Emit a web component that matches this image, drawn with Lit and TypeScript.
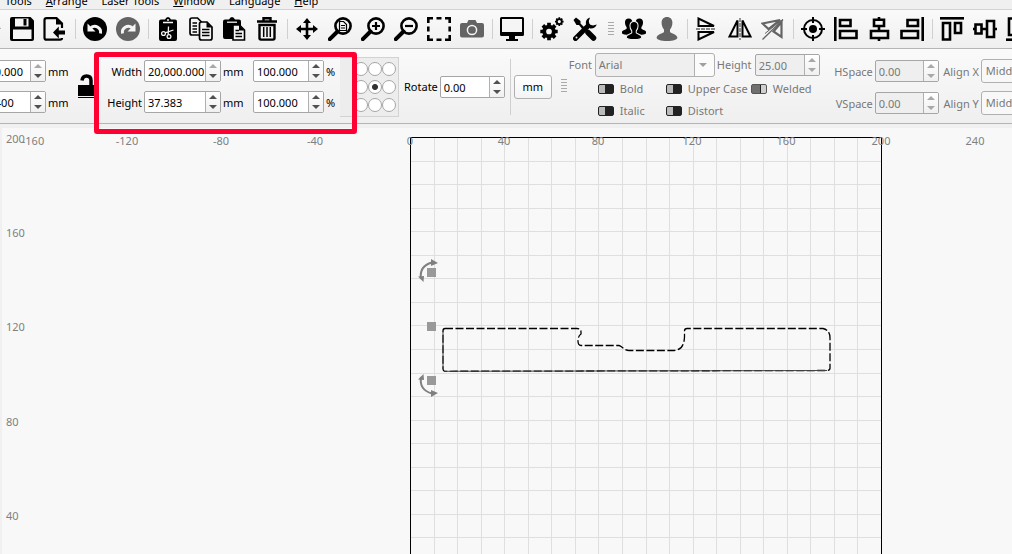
import { LitElement, html, css, svg } from "lit";
import { customElement, property } from "lit/decorators.js";

const line = (d: string, w = 2) =>
  svg`<path d=${d} fill="none" stroke="currentColor" stroke-width=${w}></path>`;

const lens = svg`<circle cx="15" cy="9" r="7.6" fill="none" stroke="currentColor" stroke-width="2.6"></circle>
  <path d="M9.5 14.5 1.8 22.2" stroke="currentColor" stroke-width="4" stroke-linecap="round"></path>`;

const bust = (x: number, y: number, s: number) =>
  svg`<path transform="translate(${x} ${y}) scale(${s})" d="M12 0C8.600 0 6.600 2.400 6.600 5.800C6.600 8.600 7.600 11 9 12.600V15C8 16.600 2 17.200 1.600 20.500C1.600 22.800 5.500 24 12 24S22.400 22.800 22.400 20.500C22 17.200 16 16.600 15 15V12.600C16.400 11 17.400 8.600 17.400 5.800C17.400 2.400 15.400 0 12 0Z"></path>`;

const gear = (cx: number, cy: number, r: number, t: number) => svg`
  <circle cx=${cx} cy=${cy} r=${r} fill="none" stroke="currentColor" stroke-width=${t}></circle>
  <g stroke="currentColor" stroke-width=${t * 0.95}>${[0, 45, 90, 135].map(
    (a) => svg`<path transform="rotate(${a} ${cx} ${cy})" d="M${cx} ${cy - r - t}V${cy - r}M${cx} ${cy + r}V${cy + r + t}"></path>`
  )}</g>`;

const icons: Record<string, unknown> = {
  open: svg`<path d="M1 20V4H9L11 6H19V9L23.500 11 19 20Z"></path>`,
  save: svg`<path d="M2 0H20.500L24 3.500V22Q24 24 22 24H2Q0 24 0 22V2Q0 0 2 0Z"></path>
    <path d="M3 12.500H21.500V22H3ZM5 1.500H18.500V9.500H5Z" fill="#f5f5f5"></path><path d="M13.500 2H16.500V8.500H13.500Z"></path>`,
  exit: svg`${line("M19 11V6.500L13.500 1.200H3.500Q1.500 1.200 1.500 3.200V20.700Q1.500 22.700 3.500 22.700H17Q19 22.700 19 21", 2.2)}
    <path d="M13 1V7.500H19.500ZM10 15.500 15.800 9.500V13.500H22V17.500H15.800V21.500Z"></path>`,
  undo: svg`<circle cx="12" cy="12" r="12"></circle><path d="M8 10.500A6 6 0 0 1 17.500 16.500" fill="none" stroke="#f5f5f5" stroke-width="3"></path><path d="M4.500 6.500V14.500H12.500Z" fill="#f5f5f5"></path>`,
  redo: svg`<circle cx="12" cy="12" r="12"></circle><path d="M16 10.500A6 6 0 0 0 6.500 16.500" fill="none" stroke="#f5f5f5" stroke-width="3"></path><path d="M19.500 6.500V14.500H11.500Z" fill="#f5f5f5"></path>`,
  cut: svg`<path d="M5 2.500H9Q10 0 12 0T15 2.500H19Q21 2.500 21 4.500V22Q21 24 19 24H5Q3 24 3 22V4.500Q3 2.500 5 2.500Z"></path>
    <g fill="none" stroke="#f5f5f5" stroke-width="1.300"><path d="M7 5.500H17M11 3H13"></path><circle cx="7.500" cy="16.500" r="1.900"></circle><circle cx="13" cy="19.500" r="1.900"></circle><path d="M9 15.800 17.500 13M12.200 17.500 12.500 9.500"></path></g>`,
  copy: svg`<g fill="#f5f5f5" stroke="currentColor" stroke-width="1.700"><path d="M3 1H8.500L13 5.500V18H3Q1 18 1 16V3Q1 1 3 1Z"></path><path d="M12.500 5H18L23 10V21Q23 23 21 23H12.500Q10.500 23 10.500 21V7Q10.500 5 12.500 5Z"></path></g>
    ${line("M3.500 6H8M3.500 9H8M3.500 12H8M3.500 15H8", 1.3)}${line("M13 12.500H20.500M13 15.500H20.500M13 18.500H20.500", 1.5)}<path d="M17.500 5V10.500H23Z"></path>`,
  paste: svg`<path d="M3 2.500H7Q8 0 10 0T13 2.500H17Q19 2.500 19 4.500V22H3Q1 22 1 20V4.500Q1 2.500 3 2.500Z"></path>
    <path d="M5 5.200H15" stroke="#f5f5f5" stroke-width="1.300"></path>
    <path d="M11 8H17.500L22.500 13V23H11Z" fill="#f5f5f5" stroke="currentColor" stroke-width="1.600"></path>${line("M13.500 13.500H17M13.500 16.500H20M13.500 19.500H20", 1.3)}<path d="M17 8V13.500H22.500Z"></path>`,
  trash: svg`${line("M2 4.500H22M8.500 4V1.200H15.500V4", 2.4)}${line("M4.500 8V21Q4.500 22.600 6 22.600H18Q19.500 22.600 19.500 21V8Z", 2.4)}${line("M8.700 10V20M12 10V20M15.300 10V20", 1.5)}`,
  move: svg`<path d="M12 1 16 6H13.300V10.700H18V8L23 12 18 16V13.300H13.300V18H16L12 23 8 18H10.700V13.300H6V16L1 12 6 8V10.700H10.700V6H8Z"></path>`,
  zoomPage: svg`${lens}<path d="M11.500 4.500H15.500L18.500 7.500V13.500H11.500Z" fill="none" stroke="currentColor" stroke-width="1.200"></path>${line("M13 8.500H17M13 11H17", 1)}`,
  zoomIn: svg`${lens}${line("M15 5V13M11 9H19", 2.2)}`,
  zoomOut: svg`${lens}${line("M11 9H19", 2.2)}`,
  frame: svg`${line("M1.300 6V1.300H6M9.500 1.300H14.500M18 1.300H22.700V6M22.700 9.500V14.500M22.700 18V22.700H18M14.500 22.700H9.500M6 22.700H1.300V18M1.300 14.500V9.500", 2.6)}`,
  camera: svg`<path d="M2 6H7L8.500 3H15.500L17 6H22Q24 6 24 8V18.500Q24 20.500 22 20.500H2Q0 20.500 0 18.500V8Q0 6 2 6Z"></path><circle cx="12" cy="13" r="4.600" fill="none" stroke="#f5f5f5" stroke-width="1.500"></circle>`,
  monitor: svg`<path d="M1.500 0H22.500Q24 0 24 1.500V17.500Q24 19 22.500 19H15V22H18V24H6V22H9V19H1.500Q0 19 0 17.500V1.500Q0 0 1.500 0Z"></path><path d="M2 2H22V15H2Z" fill="#f5f5f5"></path>`,
  gears: svg`${gear(9, 14.500, 4.800, 3.900)}${gear(19.300, 4.600, 2.500, 1.800)}`,
  tools: svg`<path d="M2.500 21.500 15 9" stroke="currentColor" stroke-width="5" stroke-linecap="round"></path>
    <path d="M17 0.500Q12 2 13 7.500L17 11.500Q22 12 23.800 7.500L20 8.500 16.500 7.500 15.800 4Z"></path>
    <path d="M0.500 3 3 0.500 7.500 4V6.500L12 11 10 13 6 8H3.500Z"></path>
    <path d="M15 15.500 20.500 21" stroke="currentColor" stroke-width="5.500" stroke-linecap="round"></path><circle cx="3.500" cy="20.500" r="1" fill="#f5f5f5"></circle>`,
  group: svg`${bust(-1.500, 1.500, 0.680)}${bust(9.200, 1.500, 0.680)}<g stroke="#f5f5f5" stroke-width="1.400">${bust(3, 4.500, 0.750)}</g>`,
  person: bust(0, 0, 1),
  flipV: svg`${line("M3.500 1.500V9H19Z", 2)}${line("M3.500 22.500V15H19Z", 2)}<path d="M1 12H21" stroke="#888" stroke-width="2" stroke-dasharray="4 1"></path>`,
  flipH: svg`${line("M9.500 3.500V19.500H1.500Z", 2)}${line("M14.500 3.500V19.500H22.500Z", 2)}<path d="M12 1V23" stroke="#888" stroke-width="1.800" stroke-dasharray="4 1"></path>`,
  mirror: svg`${line("M1.500 6.500 19 3 7.500 12ZM20.500 5V20L12.500 14.500Z", 2.2)}${line("M1.500 22.500 22 2.500", 1.3)}${line("M4 16.500 20 3.500", 1)}`,
  target: svg`${line("M12 0V6M12 18V24M0 12H6M18 12H24", 2)}<circle cx="12" cy="12" r="9" fill="none" stroke="currentColor" stroke-width="2"></circle><circle cx="12" cy="12" r="4"></circle>`,
  left: svg`${line("M1.300 0V24", 2.6)}${line("M6 3H16.500V9H6ZM6 14H22.500V21H6Z", 2.6)}`,
  center: svg`${line("M7 2.800H17V9H7ZM4 14H21V21H4ZM12 0V3M12 9V14M12 21V24", 2.6)}`,
  right: svg`${line("M22.700 0V24", 2.6)}${line("M7.500 3H18V9H7.500ZM1.500 14H18V21H1.500Z", 2.6)}`,
  top: svg`${line("M0 1.300H24", 2.6)}${line("M3 6H10V22.500H3ZM15 6H21V16H15Z", 2.6)}`,
  middle: svg`${line("M2.500 7.500H8.500V16.500H2.500ZM14 4H21V20H14ZM0 12H2.500M8.500 12H14M21 12H24", 2.6)}`,
  bottom: svg`${line("M0 22.700H24", 2.6)}${line("M3 1.500H10V18H3ZM15 8H21V18H15Z", 2.6)}`,
};

type Tool = [string, string, boolean?] | "|" | "grip";
const tools: Tool[] = [
  ["open", "Open"], ["save", "Save"], ["exit", "Import"], "|",
  ["undo", "Undo"], ["redo", "Redo", true], "|",
  ["cut", "Cut"], ["copy", "Copy"], ["paste", "Paste"], ["trash", "Delete"], "|",
  ["move", "Pan"], ["zoomPage", "Zoom to page"], ["zoomIn", "Zoom in"], ["zoomOut", "Zoom out"],
  ["frame", "Frame selection"], ["camera", "Camera", true], "|",
  ["monitor", "Preview"], "|", ["gears", "Settings"], ["tools", "Device settings"], "grip",
  ["group", "Group"], ["person", "Ungroup", true], "|",
  ["flipV", "Flip vertically"], ["flipH", "Flip horizontally"], ["mirror", "Mirror across line", true], "|",
  ["target", "Move to page center"], ["left", "Align left"], ["center", "Align centers"], ["right", "Align right"], "|",
  ["top", "Align top"], ["middle", "Align middles"], ["bottom", "Align bottom"],
];

@customElement("spin-box")
class SpinBox extends LitElement {
  @property() value = "";
  @property() label = "";
  @property({ type: Boolean, reflect: true }) disabled = false;
  @property({ type: Boolean }) atMax = false;

  static styles = css`
    :host { display: flex; box-sizing: border-box; height: 22px; border: 1px solid #a6a6a6; border-radius: 2px; background: #fff; overflow: hidden; }
    input { flex: 1; min-width: 0; border: 0; padding: 1px 0 0 3px; background: none; font: inherit; color: #000; outline: none; }
    .steps { display: flex; flex-direction: column; width: 14px; border-left: 1px solid #b0b0b0; background: linear-gradient(#fff, #f0f0f0); }
    button { flex: 1; display: grid; place-items: center; border: 0; padding: 0; background: none; color: #505050; }
    button:disabled { color: #a8a8a8; }
    svg { display: block; fill: currentColor; }
    :host([disabled]) { background: #efefef; }
    :host([disabled]) input { color: #787878; }
  `;

  render() {
    return html`<input type="text" aria-label=${this.label} .value=${this.value} ?disabled=${this.disabled} />
      <div class="steps">
        <button aria-label="Increase" ?disabled=${this.disabled || this.atMax}><svg width="8" height="4"><path d="M0 4 4 0 8 4Z"></path></svg></button>
        <button aria-label="Decrease" ?disabled=${this.disabled}><svg width="8" height="4"><path d="M0 0H8L4 4Z"></path></svg></button>
      </div>`;
  }
}

@customElement("work-area")
class WorkArea extends LitElement {
  static styles = css`
    :host { display: block; background: #f8f8f8; overflow: hidden; }
    svg { display: block; width: 100%; height: 100%; }
    text { font: 11px "Noto Sans", "Open Sans", sans-serif; fill: #808080; }
    .mid { text-anchor: middle; }
  `;

  render() {
    const ox = 408.5, oy = 9.5, step = 23.55;
    const n = [...Array(19).keys()].map((k) => k + 1);
    const snap = (v: number) => Math.floor(v) + 0.5;
    const handle = (y: number) => svg`<rect x="425" y=${y} width="9" height="9" fill="#999"></rect>`;
    const arc = svg`<path d="M419 20Q417 7 430 3.500" fill="none" stroke="#808080" stroke-width="2"></path>
      <path d="M429 0 436 4 429 7ZM416 17.500 422 17 421.500 23Z" fill="#808080"></path>`;
    return html`<svg role="img" aria-label="Workspace">
      <g stroke="#dfdfdf">
        ${n.map((k) => svg`<path d="M${snap(ox + k * step)} ${oy}V900"></path><path d="M${ox} ${snap(oy + k * step)}H${ox + 471}"></path>`)}
      </g>
      <path d="M${ox} 900V${oy}H${ox + 471}V900" fill="none" stroke="#000"></path>
      ${[-160, -120, -80, -40, 0, 40, 80, 120, 160, 200, 240].map(
        (v) => svg`<text class="mid" x=${Math.floor(408 + (v / 10) * step)} y="17">${v}</text>`
      )}
      ${[200, 160, 120, 80, 40].map((v, i) => svg`<text x="4" y=${Math.round(15 + i * 94.2)}>${v}</text>`)}
      <path d="M443 200.500H575Q579 200.500 579 204V206Q576 208 576 213Q576 217.500 579 217.500H617C620 218 622 222.500 627 222.500H672Q682 222 682.500 209V203Q682.500 200.500 685 200.500H821Q828 202 828 210V240Q828 242.500 825 242.500L443 243.300Q441 243 441 241V203Q441 200.500 443 200.500Z"
        fill="none" stroke="#000" stroke-width="1.300" stroke-dasharray="8 2.500"></path>
      <path d="M825 242.500 443 243.300M441 241V203" fill="none" stroke="#444"></path>
      ${handle(140)}${handle(194)}${handle(248)}
      <g transform="translate(0 131)">${arc}</g>
      <g transform="translate(0 269) scale(1 -1)">${arc}</g>
    </svg>`;
  }
}

@customElement("app-root")
class AppRoot extends LitElement {
  static styles = css`
    :host { display: flex; flex-direction: column; height: 100vh; overflow: hidden; background: #f0f0f0; font: 11px/16px "Noto Sans", "Open Sans", sans-serif; color: #000; }
    button, select, input { font: inherit; }
    .menu { display: flex; align-items: flex-end; gap: 14px; height: 9px; flex: none; padding-left: 5px; overflow: hidden; }
    .menu a { color: inherit; text-decoration: none; }
    .tools { display: flex; align-items: center; flex: none; height: 38px; border-top: 1px solid #d2d2d2; border-bottom: 1px solid #b4b4b4; background: linear-gradient(#fafafa, #efefef); overflow: hidden; }
    .tools button:first-child { margin-left: -27px; }
    .tools button { flex: none; width: 33px; height: 24px; border: 0; padding: 0 5px 0 4px; background: none; color: #000; }
    .tools button:disabled { color: #646464; }
    .tools svg { display: block; fill: currentColor; }
    .rule { flex: none; width: 1px; height: 20px; margin: 0 3px; background: #d0d0d0; }
    .grip { flex: none; width: 6px; height: 16px; background: radial-gradient(circle, #aaa 0.7px, transparent 1px) 0 0 / 2px 3px; }
    .tools .grip { margin: 0 4px 0 6px; }
    .props { display: flex; align-items: flex-start; flex: none; height: 74px; border-bottom: 1px solid #b4b4b4; background: linear-gradient(#fafafa, #efefef); }
    .props > * { flex: none; }
    .pair { display: grid; column-gap: 2px; row-gap: 9px; align-items: center; margin-top: 11px; }
    .pair label, .pair span { padding-top: 1px; }
    .pos { grid-template-columns: 77px 24px; margin-left: -31px; }
    .lock { display: block; width: 20px; border: 0; padding: 0; margin: 25px 0 0 5px; background: none; }
    .lock svg { display: block; }
    .size { position: relative; grid-template-columns: 40px 77px 28px 71px 14px; margin-left: 5px; }
    .size::after { content: ""; position: absolute; z-index: 2; inset: -8px -17px -21px -8px; border: 5px solid #ff0033; border-radius: 3px; pointer-events: none; }
    .size label { text-align: right; }
    .anchor { display: grid; grid-template-columns: repeat(3, 14px); gap: 4px 0; margin-top: 8px; padding: 4px 2px 4px 14px; border: 1px solid #d2d2d2; border-left: 0; background: #ededed; }
    .anchor input { appearance: none; width: 14px; height: 14px; margin: 0; border: 1px solid #a6a6a6; border-radius: 50%; background: #fff; }
    .anchor input:checked { background: radial-gradient(circle, #333 2.5px, #fff 3.5px); }
    .rotate { display: flex; align-items: center; gap: 2px; margin: 27px 5px 0; }
    .rotate spin-box { width: 65px; }
    .tall { width: 1px; height: 56px; margin-top: 10px; background: #cfcfcf; }
    .unit { width: 38px; height: 24px; margin: 26px 9px 0 3px; border: 1px solid #b0b0b0; border-radius: 3px; padding: 0; background: linear-gradient(#fff, #f4f4f4); }
    .props > .grip { margin-top: 29px; }
    .text { color: #787878; margin: 4px 0 0 2px; }
    .face { display: flex; align-items: center; gap: 2px; }
    .face label { width: 24px; }
    .face label.h { width: 36px; }
    .face spin-box { width: 65px; }
    .pick { position: relative; display: flex; }
    .pick::after { content: ""; position: absolute; right: 8px; top: 10px; border: 4px solid transparent; border-top-color: #a0a0a0; border-bottom: 0; }
    select { appearance: none; border: 1px solid #b0b0b0; border-radius: 3px; padding: 0 4px; color: #787878; opacity: 1; }
    .pick select { width: 120px; height: 24px; padding: 0 3px; background: linear-gradient(90deg, #efefef 98px, #b0b0b0 98px 99px, #fbfbfb 99px); }
    .flags { display: grid; grid-template-columns: 68px 85px 70px; row-gap: 6px; margin: 4px 0 0 29px; }
    .flags label { display: flex; align-items: center; gap: 6px; white-space: nowrap; }
    .flags input { appearance: none; flex: none; width: 16px; height: 10px; margin: 0; border: 1px solid #222; border-radius: 2px; background: linear-gradient(90deg, #bbb 6px, #222 6px); }
    .flags input:checked { border-color: #555; background: linear-gradient(90deg, #707070 8px, #222 8px 9px, #d0d0d0 9px); }
    .space { grid-template-columns: 40px 64px 38px 80px; row-gap: 10px; margin-left: 12px; color: #787878; white-space: nowrap; }
    .space label { text-align: right; }
    .space select { height: 24px; margin: -1px 0; background: #f8f8f8; }
    work-area { flex: 1; min-height: 0; margin: 4px 0 0 2px; }
  `;

  render() {
    const sw = (name: string, on = false) =>
      html`<label><input type="checkbox" ?checked=${on} disabled />${name}</label>`;
    return html`
      <nav class="menu">
        <a href="#">Tools</a><a href="#"><u>A</u>rrange</a><a href="#">Laser Tools</a><a href="#"><u>W</u>indow</a><a href="#">Language</a><a href="#"><u>H</u>elp</a>
      </nav>
      <div class="tools">
        ${tools.map((t) =>
          t === "|" ? html`<span class="rule"></span>`
          : t === "grip" ? html`<span class="grip"></span>`
          : html`<button aria-label=${t[1]} ?disabled=${t[2]}><svg width="24" height="24" viewBox="0 0 24 24">${icons[t[0]]}</svg></button>`
        )}
      </div>
      <div class="props">
        <div class="pair pos">
          <spin-box label="X position" value="9,990.000" .atMax=${true}></spin-box><span>mm</span>
          <spin-box label="Y position" value="119.400"></spin-box><span>mm</span>
        </div>
        <button class="lock" aria-label="Lock aspect ratio">
          <svg width="20" height="24" viewBox="0 0 20 24"><path d="M1 11H20V22H1ZM1 23H20V24H1Z"></path><path d="M5 6.500Q5.500 2 9.500 2Q14 2 14 6.500V11" fill="none" stroke="#000" stroke-width="3.500"></path></svg>
        </button>
        <div class="pair size">
          <label>Width</label><spin-box label="Width" value="20,000.000" .atMax=${true}></spin-box><span>mm</span>
          <spin-box label="Width percent" value="100.000"></spin-box><span>%</span>
          <label>Height</label><spin-box label="Height" value="37.383"></spin-box><span>mm</span>
          <spin-box label="Height percent" value="100.000"></spin-box><span>%</span>
        </div>
        <div class="anchor" role="radiogroup" aria-label="Anchor point">
          ${[...Array(9).keys()].map((i) => html`<input type="radio" name="anchor" aria-label="Anchor ${i + 1}" ?checked=${i === 4} />`)}
        </div>
        <div class="rotate"><label>Rotate</label><spin-box label="Rotate" value="0.00"></spin-box></div>
        <span class="tall"></span>
        <button class="unit">mm</button>
        <span class="grip"></span>
        <div class="text">
          <div class="face">
            <label for="font">Font</label>
            <span class="pick"><select id="font" disabled><option>Arial</option></select></span>
            <label class="h">Height</label><spin-box label="Text height" value="25.00" disabled></spin-box>
          </div>
          <div class="flags">${sw("Bold")}${sw("Upper Case")}${sw("Welded", true)}${sw("Italic")}${sw("Distort")}</div>
        </div>
        <div class="pair space">
          <label>HSpace</label><spin-box label="HSpace" value="0.00" disabled></spin-box>
          <label for="ax">Align X</label><select id="ax" disabled><option>Middle</option></select>
          <label>VSpace</label><spin-box label="VSpace" value="0.00" disabled></spin-box>
          <label for="ay">Align Y</label><select id="ay" disabled><option>Middle</option></select>
        </div>
      </div>
      <work-area></work-area>
    `;
  }
}
